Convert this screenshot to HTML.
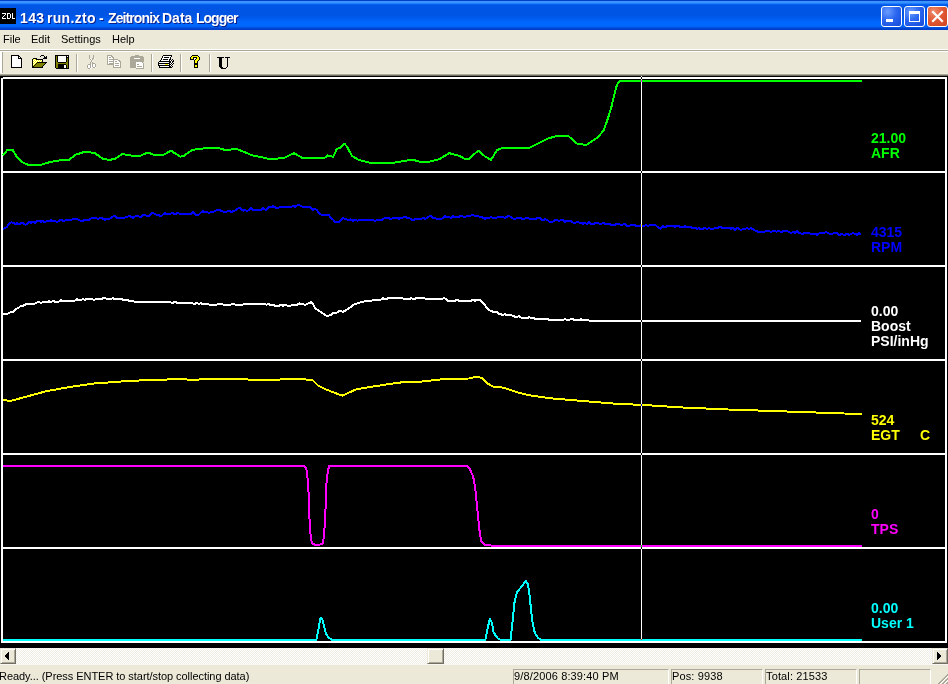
<!DOCTYPE html>
<html><head><meta charset="utf-8">
<style>
*{margin:0;padding:0;box-sizing:border-box}
html,body{width:948px;height:684px;overflow:hidden;background:#ECE9D8;font-family:"Liberation Sans",sans-serif;position:relative}
.a{position:absolute}
#title{left:0;top:0;width:948px;height:30px;
background:linear-gradient(to bottom,#0040C8 0px,#0040C8 1px,#3D95FF 1px,#3A93FF 3px,#0A6AF7 4px,#0058E8 5px,#0055E5 8px,#0054E3 15px,#005AEE 18px,#0063F8 21px,#0068FF 24px,#0066FC 26px,#005CEE 27px,#004CDA 28px,#003FC8 29px,#003FC8 30px)}
#ttl{left:20px;top:10px;font-weight:bold;font-size:14px;color:#fff;letter-spacing:-0.5px;text-shadow:1px 1px 0 #0A1C8A;white-space:nowrap;line-height:17px}
#zdl{left:0;top:8px;width:16px;height:16px;background:#000;color:#fff;font-size:8.5px;line-height:16px;text-align:center;font-weight:normal;letter-spacing:0px;-webkit-text-stroke:0.3px #fff}
.wb{top:6px;width:21px;height:21px;border:1px solid #fff;border-radius:3px}
#bmin{left:881px;background:radial-gradient(circle at 30% 25%,#6A9CFF 0,#2B67F0 45%,#1448D8 100%)}
#bmax{left:904px;background:radial-gradient(circle at 30% 25%,#6A9CFF 0,#2B67F0 45%,#1448D8 100%)}
#bcls{left:927px;background:radial-gradient(circle at 30% 25%,#EE8E6E 0,#E25A34 45%,#CC4220 100%)}
#menu{left:0;top:30px;width:948px;height:19px;background:#ECE9D8;font-size:11px;color:#000}
#menu span{position:absolute;top:3px;line-height:13px}
#mline{left:0;top:49px;width:948px;height:3px;background:linear-gradient(#fff 0,#fff 1px,#ACA899 1px,#ACA899 2px,#fff 2px)}
#tb{left:0;top:52px;width:948px;height:24px;background:linear-gradient(to bottom,#ECE9D8 0,#ECE9D8 21px,#EFEDE0 21px,#EFEDE0 22px,#ACA899 22px,#ACA899 23px,#716F64 23px)}
.sep{top:55px;width:2px;height:17px;border-left:1px solid #ACA899;border-right:1px solid #fff}
#grip{left:0;top:52px;width:3px;height:21px;border-right:1px solid #ACA899;background:#fff}
#chart{left:0;top:76px;width:948px;height:572px;background:#000}
#cursor{left:641px;top:76px;width:1px;height:564px;background:#fff;mix-blend-mode:difference}
.lab{position:absolute;left:871px;font-weight:bold;font-size:14px;line-height:15px;white-space:pre}
#sb{left:0;top:648px;width:948px;height:16px;
background-color:#fff;
background-image:linear-gradient(45deg,#EFEDE3 25%,transparent 25%,transparent 75%,#EFEDE3 75%),linear-gradient(45deg,#EFEDE3 25%,transparent 25%,transparent 75%,#EFEDE3 75%);
background-size:2px 2px;background-position:0 0,1px 1px}
.btn3d{position:absolute;background:#ECE9D8;border-top:1px solid #ECE9D8;border-left:1px solid #ECE9D8;border-right:1px solid #716F64;border-bottom:1px solid #716F64;box-shadow:inset 1px 1px 0 #fff,inset -1px -1px 0 #ACA899}
#status{left:0;top:664px;width:948px;height:20px;background:#ECE9D8;border-top:1px solid #F7F6F0;font-size:11px;color:#000}
.pane{position:absolute;top:4px;height:16px;border-top:1px solid #ACA899;border-left:1px solid #ACA899;border-right:1px solid #fff;white-space:nowrap;line-height:13px;padding-left:0px;padding-top:0px;letter-spacing:0.14px}
</style></head><body>
<div id="title" class="a"></div>
<svg class="a" style="left:0;top:8px" width="16" height="16" shape-rendering="crispEdges"><rect width="16" height="16" fill="#000"/><g fill="#fff"><rect x="2" y="5" width="4" height="1"/><rect x="5" y="6" width="1" height="1"/><rect x="4" y="7" width="1" height="1"/><rect x="3" y="8" width="1" height="1"/><rect x="2" y="9" width="1" height="1"/><rect x="2" y="10" width="4" height="1"/><rect x="7" y="5" width="1" height="6"/><rect x="8" y="5" width="2" height="1"/><rect x="8" y="10" width="2" height="1"/><rect x="10" y="6" width="1" height="4"/><rect x="12" y="5" width="1" height="6"/><rect x="13" y="10" width="2" height="1"/></g></svg>
<div id="ttl" class="a" style="left:0"><span class="a" style="left:20px;letter-spacing:0.4px">143</span><span class="a" style="left:47px;letter-spacing:0.3px">run.zto</span><span class="a" style="left:99px">-</span><span class="a" style="left:108px;letter-spacing:-0.9px">Zeitronix</span><span class="a" style="left:162px;letter-spacing:0px">Data</span><span class="a" style="left:196px;letter-spacing:-1px">Logger</span></div>
<div id="bmin" class="a wb"><div class="a" style="left:4px;top:12px;width:7px;height:3px;background:#fff"></div></div>
<div id="bmax" class="a wb"><div class="a" style="left:4px;top:4px;width:11px;height:11px;border:1px solid #fff;border-top-width:3px"></div></div>
<div id="bcls" class="a wb"><svg class="a" style="left:0;top:0" width="19" height="19" viewBox="0 0 19 19"><path d="M5 5 L14 14 M14 5 L5 14" stroke="#fff" stroke-width="2.2" stroke-linecap="square"/></svg></div>

<div id="menu" class="a"><span style="left:3px">File</span><span style="left:31px">Edit</span><span style="left:61px">Settings</span><span style="left:112px">Help</span></div>
<div id="mline" class="a"></div>
<div id="tb" class="a"></div>
<div id="grip" class="a"></div>
<svg class="a" style="left:0;top:52px" width="240" height="22" viewBox="0 52 240 22" shape-rendering="crispEdges">
<rect x="11" y="55" width="8" height="1" fill="#000"/>
<rect x="11" y="56" width="1" height="1" fill="#000"/>
<rect x="12" y="56" width="6" height="1" fill="#fff"/>
<rect x="18" y="56" width="2" height="1" fill="#000"/>
<rect x="11" y="57" width="1" height="1" fill="#000"/>
<rect x="12" y="57" width="6" height="1" fill="#fff"/>
<rect x="18" y="57" width="1" height="1" fill="#000"/>
<rect x="19" y="57" width="1" height="1" fill="#fff"/>
<rect x="20" y="57" width="1" height="1" fill="#000"/>
<rect x="11" y="58" width="1" height="1" fill="#000"/>
<rect x="12" y="58" width="6" height="1" fill="#fff"/>
<rect x="18" y="58" width="4" height="1" fill="#000"/>
<rect x="11" y="59" width="1" height="1" fill="#000"/>
<rect x="12" y="59" width="9" height="1" fill="#fff"/>
<rect x="21" y="59" width="1" height="1" fill="#000"/>
<rect x="11" y="60" width="1" height="1" fill="#000"/>
<rect x="12" y="60" width="9" height="1" fill="#fff"/>
<rect x="21" y="60" width="1" height="1" fill="#000"/>
<rect x="11" y="61" width="1" height="1" fill="#000"/>
<rect x="12" y="61" width="9" height="1" fill="#fff"/>
<rect x="21" y="61" width="1" height="1" fill="#000"/>
<rect x="11" y="62" width="1" height="1" fill="#000"/>
<rect x="12" y="62" width="9" height="1" fill="#fff"/>
<rect x="21" y="62" width="1" height="1" fill="#000"/>
<rect x="11" y="63" width="1" height="1" fill="#000"/>
<rect x="12" y="63" width="9" height="1" fill="#fff"/>
<rect x="21" y="63" width="1" height="1" fill="#000"/>
<rect x="11" y="64" width="1" height="1" fill="#000"/>
<rect x="12" y="64" width="9" height="1" fill="#fff"/>
<rect x="21" y="64" width="1" height="1" fill="#000"/>
<rect x="11" y="65" width="1" height="1" fill="#000"/>
<rect x="12" y="65" width="9" height="1" fill="#fff"/>
<rect x="21" y="65" width="1" height="1" fill="#000"/>
<rect x="11" y="66" width="1" height="1" fill="#000"/>
<rect x="12" y="66" width="9" height="1" fill="#fff"/>
<rect x="21" y="66" width="1" height="1" fill="#000"/>
<rect x="11" y="67" width="11" height="1" fill="#000"/>
<rect x="41" y="55" width="3" height="1" fill="#000"/>
<rect x="40" y="56" width="1" height="1" fill="#000"/>
<rect x="44" y="56" width="1" height="1" fill="#000"/>
<rect x="46" y="56" width="1" height="1" fill="#000"/>
<rect x="44" y="57" width="3" height="1" fill="#000"/>
<rect x="33" y="58" width="4" height="1" fill="#000"/>
<rect x="43" y="58" width="4" height="1" fill="#000"/>
<rect x="32" y="59" width="1" height="1" fill="#000"/>
<rect x="33" y="59" width="1" height="1" fill="#ffff00"/>
<rect x="34" y="59" width="1" height="1" fill="#fff"/>
<rect x="35" y="59" width="1" height="1" fill="#ffff00"/>
<rect x="36" y="59" width="7" height="1" fill="#000"/>
<rect x="32" y="60" width="1" height="1" fill="#000"/>
<rect x="33" y="60" width="1" height="1" fill="#fff"/>
<rect x="34" y="60" width="1" height="1" fill="#ffff00"/>
<rect x="35" y="60" width="1" height="1" fill="#fff"/>
<rect x="36" y="60" width="1" height="1" fill="#ffff00"/>
<rect x="37" y="60" width="1" height="1" fill="#fff"/>
<rect x="38" y="60" width="1" height="1" fill="#ffff00"/>
<rect x="39" y="60" width="1" height="1" fill="#fff"/>
<rect x="40" y="60" width="1" height="1" fill="#ffff00"/>
<rect x="41" y="60" width="1" height="1" fill="#fff"/>
<rect x="42" y="60" width="1" height="1" fill="#000"/>
<rect x="32" y="61" width="1" height="1" fill="#000"/>
<rect x="33" y="61" width="1" height="1" fill="#ffff00"/>
<rect x="34" y="61" width="1" height="1" fill="#fff"/>
<rect x="35" y="61" width="1" height="1" fill="#ffff00"/>
<rect x="36" y="61" width="1" height="1" fill="#fff"/>
<rect x="37" y="61" width="1" height="1" fill="#ffff00"/>
<rect x="38" y="61" width="1" height="1" fill="#fff"/>
<rect x="39" y="61" width="1" height="1" fill="#ffff00"/>
<rect x="40" y="61" width="1" height="1" fill="#fff"/>
<rect x="41" y="61" width="1" height="1" fill="#ffff00"/>
<rect x="42" y="61" width="1" height="1" fill="#000"/>
<rect x="32" y="62" width="1" height="1" fill="#000"/>
<rect x="33" y="62" width="1" height="1" fill="#fff"/>
<rect x="34" y="62" width="1" height="1" fill="#ffff00"/>
<rect x="35" y="62" width="1" height="1" fill="#fff"/>
<rect x="36" y="62" width="1" height="1" fill="#ffff00"/>
<rect x="37" y="62" width="10" height="1" fill="#000"/>
<rect x="32" y="63" width="1" height="1" fill="#000"/>
<rect x="33" y="63" width="1" height="1" fill="#ffff00"/>
<rect x="34" y="63" width="1" height="1" fill="#fff"/>
<rect x="35" y="63" width="1" height="1" fill="#ffff00"/>
<rect x="36" y="63" width="1" height="1" fill="#000"/>
<rect x="37" y="63" width="8" height="1" fill="#808000"/>
<rect x="45" y="63" width="1" height="1" fill="#000"/>
<rect x="32" y="64" width="1" height="1" fill="#000"/>
<rect x="33" y="64" width="1" height="1" fill="#fff"/>
<rect x="34" y="64" width="1" height="1" fill="#ffff00"/>
<rect x="35" y="64" width="1" height="1" fill="#000"/>
<rect x="36" y="64" width="8" height="1" fill="#808000"/>
<rect x="44" y="64" width="1" height="1" fill="#000"/>
<rect x="32" y="65" width="1" height="1" fill="#000"/>
<rect x="33" y="65" width="1" height="1" fill="#ffff00"/>
<rect x="34" y="65" width="1" height="1" fill="#000"/>
<rect x="35" y="65" width="8" height="1" fill="#808000"/>
<rect x="43" y="65" width="1" height="1" fill="#000"/>
<rect x="32" y="66" width="2" height="1" fill="#000"/>
<rect x="34" y="66" width="8" height="1" fill="#808000"/>
<rect x="42" y="66" width="1" height="1" fill="#000"/>
<rect x="32" y="67" width="11" height="1" fill="#000"/>
<rect x="55" y="55" width="14" height="1" fill="#000"/>
<rect x="55" y="56" width="1" height="1" fill="#000"/>
<rect x="56" y="56" width="1" height="1" fill="#808000"/>
<rect x="57" y="56" width="1" height="1" fill="#000"/>
<rect x="58" y="56" width="8" height="1" fill="#fff"/>
<rect x="66" y="56" width="1" height="1" fill="#000"/>
<rect x="67" y="56" width="1" height="1" fill="#fff"/>
<rect x="68" y="56" width="1" height="1" fill="#000"/>
<rect x="55" y="57" width="1" height="1" fill="#000"/>
<rect x="56" y="57" width="1" height="1" fill="#808000"/>
<rect x="57" y="57" width="1" height="1" fill="#000"/>
<rect x="58" y="57" width="8" height="1" fill="#fff"/>
<rect x="66" y="57" width="3" height="1" fill="#000"/>
<rect x="55" y="58" width="1" height="1" fill="#000"/>
<rect x="56" y="58" width="1" height="1" fill="#808000"/>
<rect x="57" y="58" width="1" height="1" fill="#000"/>
<rect x="58" y="58" width="8" height="1" fill="#fff"/>
<rect x="66" y="58" width="1" height="1" fill="#000"/>
<rect x="67" y="58" width="1" height="1" fill="#808000"/>
<rect x="68" y="58" width="1" height="1" fill="#000"/>
<rect x="55" y="59" width="1" height="1" fill="#000"/>
<rect x="56" y="59" width="1" height="1" fill="#808000"/>
<rect x="57" y="59" width="1" height="1" fill="#000"/>
<rect x="58" y="59" width="8" height="1" fill="#fff"/>
<rect x="66" y="59" width="1" height="1" fill="#000"/>
<rect x="67" y="59" width="1" height="1" fill="#808000"/>
<rect x="68" y="59" width="1" height="1" fill="#000"/>
<rect x="55" y="60" width="1" height="1" fill="#000"/>
<rect x="56" y="60" width="1" height="1" fill="#808000"/>
<rect x="57" y="60" width="1" height="1" fill="#000"/>
<rect x="58" y="60" width="8" height="1" fill="#fff"/>
<rect x="66" y="60" width="1" height="1" fill="#000"/>
<rect x="67" y="60" width="1" height="1" fill="#808000"/>
<rect x="68" y="60" width="1" height="1" fill="#000"/>
<rect x="55" y="61" width="1" height="1" fill="#000"/>
<rect x="56" y="61" width="1" height="1" fill="#808000"/>
<rect x="57" y="61" width="1" height="1" fill="#000"/>
<rect x="58" y="61" width="8" height="1" fill="#fff"/>
<rect x="66" y="61" width="1" height="1" fill="#000"/>
<rect x="67" y="61" width="1" height="1" fill="#808000"/>
<rect x="68" y="61" width="1" height="1" fill="#000"/>
<rect x="55" y="62" width="1" height="1" fill="#000"/>
<rect x="56" y="62" width="2" height="1" fill="#808000"/>
<rect x="58" y="62" width="8" height="1" fill="#000"/>
<rect x="66" y="62" width="2" height="1" fill="#808000"/>
<rect x="68" y="62" width="1" height="1" fill="#000"/>
<rect x="55" y="63" width="1" height="1" fill="#000"/>
<rect x="56" y="63" width="12" height="1" fill="#808000"/>
<rect x="68" y="63" width="1" height="1" fill="#000"/>
<rect x="55" y="64" width="1" height="1" fill="#000"/>
<rect x="56" y="64" width="2" height="1" fill="#808000"/>
<rect x="58" y="64" width="8" height="1" fill="#000"/>
<rect x="66" y="64" width="2" height="1" fill="#808000"/>
<rect x="68" y="64" width="1" height="1" fill="#000"/>
<rect x="55" y="65" width="1" height="1" fill="#000"/>
<rect x="56" y="65" width="2" height="1" fill="#808000"/>
<rect x="58" y="65" width="6" height="1" fill="#000"/>
<rect x="64" y="65" width="2" height="1" fill="#fff"/>
<rect x="66" y="65" width="1" height="1" fill="#000"/>
<rect x="67" y="65" width="1" height="1" fill="#808000"/>
<rect x="68" y="65" width="1" height="1" fill="#000"/>
<rect x="55" y="66" width="1" height="1" fill="#000"/>
<rect x="56" y="66" width="2" height="1" fill="#808000"/>
<rect x="58" y="66" width="6" height="1" fill="#000"/>
<rect x="64" y="66" width="2" height="1" fill="#fff"/>
<rect x="66" y="66" width="1" height="1" fill="#000"/>
<rect x="67" y="66" width="1" height="1" fill="#808000"/>
<rect x="68" y="66" width="1" height="1" fill="#000"/>
<rect x="55" y="67" width="1" height="1" fill="#000"/>
<rect x="56" y="67" width="2" height="1" fill="#808000"/>
<rect x="58" y="67" width="6" height="1" fill="#000"/>
<rect x="64" y="67" width="2" height="1" fill="#fff"/>
<rect x="66" y="67" width="1" height="1" fill="#000"/>
<rect x="67" y="67" width="1" height="1" fill="#808000"/>
<rect x="68" y="67" width="1" height="1" fill="#000"/>
<rect x="56" y="68" width="13" height="1" fill="#000"/>
<rect x="89" y="55" width="1" height="1" fill="#ACA899"/>
<rect x="93" y="55" width="1" height="1" fill="#ACA899"/>
<rect x="89" y="56" width="1" height="1" fill="#ACA899"/>
<rect x="93" y="56" width="1" height="1" fill="#ACA899"/>
<rect x="89" y="57" width="1" height="1" fill="#ACA899"/>
<rect x="93" y="57" width="1" height="1" fill="#ACA899"/>
<rect x="89" y="58" width="1" height="1" fill="#ACA899"/>
<rect x="90" y="58" width="1" height="1" fill="#fff"/>
<rect x="92" y="58" width="2" height="1" fill="#ACA899"/>
<rect x="94" y="58" width="1" height="1" fill="#fff"/>
<rect x="90" y="59" width="1" height="1" fill="#ACA899"/>
<rect x="91" y="59" width="1" height="1" fill="#fff"/>
<rect x="92" y="59" width="1" height="1" fill="#ACA899"/>
<rect x="91" y="60" width="1" height="1" fill="#ACA899"/>
<rect x="91" y="61" width="1" height="1" fill="#ACA899"/>
<rect x="92" y="61" width="1" height="1" fill="#fff"/>
<rect x="90" y="62" width="1" height="1" fill="#ACA899"/>
<rect x="92" y="62" width="1" height="1" fill="#ACA899"/>
<rect x="90" y="63" width="1" height="1" fill="#ACA899"/>
<rect x="92" y="63" width="3" height="1" fill="#ACA899"/>
<rect x="88" y="64" width="3" height="1" fill="#ACA899"/>
<rect x="91" y="64" width="1" height="1" fill="#fff"/>
<rect x="92" y="64" width="1" height="1" fill="#ACA899"/>
<rect x="93" y="64" width="2" height="1" fill="#fff"/>
<rect x="95" y="64" width="1" height="1" fill="#ACA899"/>
<rect x="87" y="65" width="1" height="1" fill="#ACA899"/>
<rect x="88" y="65" width="2" height="1" fill="#fff"/>
<rect x="90" y="65" width="1" height="1" fill="#ACA899"/>
<rect x="91" y="65" width="1" height="1" fill="#fff"/>
<rect x="92" y="65" width="1" height="1" fill="#ACA899"/>
<rect x="93" y="65" width="2" height="1" fill="#fff"/>
<rect x="95" y="65" width="1" height="1" fill="#ACA899"/>
<rect x="87" y="66" width="1" height="1" fill="#ACA899"/>
<rect x="88" y="66" width="2" height="1" fill="#fff"/>
<rect x="90" y="66" width="1" height="1" fill="#ACA899"/>
<rect x="91" y="66" width="1" height="1" fill="#fff"/>
<rect x="92" y="66" width="1" height="1" fill="#ACA899"/>
<rect x="93" y="66" width="2" height="1" fill="#fff"/>
<rect x="95" y="66" width="1" height="1" fill="#ACA899"/>
<rect x="87" y="67" width="1" height="1" fill="#ACA899"/>
<rect x="88" y="67" width="2" height="1" fill="#fff"/>
<rect x="90" y="67" width="1" height="1" fill="#ACA899"/>
<rect x="91" y="67" width="1" height="1" fill="#fff"/>
<rect x="93" y="67" width="2" height="1" fill="#ACA899"/>
<rect x="95" y="67" width="1" height="1" fill="#fff"/>
<rect x="88" y="68" width="2" height="1" fill="#ACA899"/>
<rect x="90" y="68" width="1" height="1" fill="#fff"/>
<rect x="107" y="55" width="5" height="1" fill="#ACA899"/>
<rect x="107" y="56" width="1" height="1" fill="#ACA899"/>
<rect x="108" y="56" width="3" height="1" fill="#fff"/>
<rect x="111" y="56" width="2" height="1" fill="#ACA899"/>
<rect x="107" y="57" width="1" height="1" fill="#ACA899"/>
<rect x="108" y="57" width="1" height="1" fill="#fff"/>
<rect x="109" y="57" width="2" height="1" fill="#ACA899"/>
<rect x="111" y="57" width="1" height="1" fill="#fff"/>
<rect x="112" y="57" width="2" height="1" fill="#ACA899"/>
<rect x="107" y="58" width="1" height="1" fill="#ACA899"/>
<rect x="108" y="58" width="5" height="1" fill="#fff"/>
<rect x="113" y="58" width="1" height="1" fill="#ACA899"/>
<rect x="107" y="59" width="1" height="1" fill="#ACA899"/>
<rect x="108" y="59" width="1" height="1" fill="#fff"/>
<rect x="109" y="59" width="9" height="1" fill="#ACA899"/>
<rect x="107" y="60" width="1" height="1" fill="#ACA899"/>
<rect x="108" y="60" width="5" height="1" fill="#fff"/>
<rect x="113" y="60" width="1" height="1" fill="#ACA899"/>
<rect x="114" y="60" width="4" height="1" fill="#fff"/>
<rect x="118" y="60" width="2" height="1" fill="#ACA899"/>
<rect x="107" y="61" width="1" height="1" fill="#ACA899"/>
<rect x="108" y="61" width="1" height="1" fill="#fff"/>
<rect x="109" y="61" width="5" height="1" fill="#ACA899"/>
<rect x="114" y="61" width="1" height="1" fill="#fff"/>
<rect x="115" y="61" width="2" height="1" fill="#ACA899"/>
<rect x="117" y="61" width="2" height="1" fill="#fff"/>
<rect x="119" y="61" width="2" height="1" fill="#ACA899"/>
<rect x="107" y="62" width="1" height="1" fill="#ACA899"/>
<rect x="108" y="62" width="5" height="1" fill="#fff"/>
<rect x="113" y="62" width="1" height="1" fill="#ACA899"/>
<rect x="114" y="62" width="6" height="1" fill="#fff"/>
<rect x="120" y="62" width="1" height="1" fill="#ACA899"/>
<rect x="107" y="63" width="1" height="1" fill="#ACA899"/>
<rect x="108" y="63" width="1" height="1" fill="#fff"/>
<rect x="109" y="63" width="5" height="1" fill="#ACA899"/>
<rect x="114" y="63" width="1" height="1" fill="#fff"/>
<rect x="115" y="63" width="4" height="1" fill="#ACA899"/>
<rect x="119" y="63" width="1" height="1" fill="#fff"/>
<rect x="120" y="63" width="1" height="1" fill="#ACA899"/>
<rect x="107" y="64" width="7" height="1" fill="#ACA899"/>
<rect x="114" y="64" width="6" height="1" fill="#fff"/>
<rect x="120" y="64" width="1" height="1" fill="#ACA899"/>
<rect x="113" y="65" width="1" height="1" fill="#ACA899"/>
<rect x="114" y="65" width="1" height="1" fill="#fff"/>
<rect x="115" y="65" width="4" height="1" fill="#ACA899"/>
<rect x="119" y="65" width="1" height="1" fill="#fff"/>
<rect x="120" y="65" width="1" height="1" fill="#ACA899"/>
<rect x="113" y="66" width="1" height="1" fill="#ACA899"/>
<rect x="114" y="66" width="6" height="1" fill="#fff"/>
<rect x="120" y="66" width="1" height="1" fill="#ACA899"/>
<rect x="113" y="67" width="8" height="1" fill="#ACA899"/>
<rect x="135" y="55" width="4" height="1" fill="#ACA899"/>
<rect x="131" y="56" width="12" height="1" fill="#ACA899"/>
<rect x="130" y="57" width="14" height="1" fill="#ACA899"/>
<rect x="130" y="58" width="4" height="1" fill="#ACA899"/>
<rect x="134" y="58" width="6" height="1" fill="#fff"/>
<rect x="140" y="58" width="4" height="1" fill="#ACA899"/>
<rect x="130" y="59" width="14" height="1" fill="#ACA899"/>
<rect x="130" y="60" width="14" height="1" fill="#ACA899"/>
<rect x="130" y="61" width="14" height="1" fill="#ACA899"/>
<rect x="130" y="62" width="6" height="1" fill="#ACA899"/>
<rect x="136" y="62" width="6" height="1" fill="#fff"/>
<rect x="142" y="62" width="1" height="1" fill="#ACA899"/>
<rect x="130" y="63" width="6" height="1" fill="#ACA899"/>
<rect x="136" y="63" width="7" height="1" fill="#fff"/>
<rect x="143" y="63" width="1" height="1" fill="#ACA899"/>
<rect x="130" y="64" width="6" height="1" fill="#ACA899"/>
<rect x="136" y="64" width="1" height="1" fill="#fff"/>
<rect x="137" y="64" width="2" height="1" fill="#ACA899"/>
<rect x="139" y="64" width="4" height="1" fill="#fff"/>
<rect x="143" y="64" width="1" height="1" fill="#ACA899"/>
<rect x="130" y="65" width="6" height="1" fill="#ACA899"/>
<rect x="136" y="65" width="7" height="1" fill="#fff"/>
<rect x="143" y="65" width="1" height="1" fill="#ACA899"/>
<rect x="130" y="66" width="6" height="1" fill="#ACA899"/>
<rect x="136" y="66" width="1" height="1" fill="#fff"/>
<rect x="137" y="66" width="5" height="1" fill="#ACA899"/>
<rect x="142" y="66" width="1" height="1" fill="#fff"/>
<rect x="143" y="66" width="1" height="1" fill="#ACA899"/>
<rect x="130" y="67" width="6" height="1" fill="#ACA899"/>
<rect x="136" y="67" width="7" height="1" fill="#fff"/>
<rect x="143" y="67" width="1" height="1" fill="#ACA899"/>
<rect x="136" y="68" width="8" height="1" fill="#ACA899"/>
<rect x="163" y="55" width="9" height="1" fill="#000"/>
<rect x="162" y="56" width="1" height="1" fill="#000"/>
<rect x="163" y="56" width="8" height="1" fill="#fff"/>
<rect x="171" y="56" width="1" height="1" fill="#000"/>
<rect x="162" y="57" width="1" height="1" fill="#000"/>
<rect x="163" y="57" width="1" height="1" fill="#fff"/>
<rect x="164" y="57" width="5" height="1" fill="#000"/>
<rect x="169" y="57" width="1" height="1" fill="#fff"/>
<rect x="170" y="57" width="1" height="1" fill="#000"/>
<rect x="161" y="58" width="1" height="1" fill="#000"/>
<rect x="162" y="58" width="8" height="1" fill="#fff"/>
<rect x="170" y="58" width="1" height="1" fill="#000"/>
<rect x="161" y="59" width="1" height="1" fill="#000"/>
<rect x="162" y="59" width="1" height="1" fill="#fff"/>
<rect x="163" y="59" width="5" height="1" fill="#000"/>
<rect x="168" y="59" width="1" height="1" fill="#fff"/>
<rect x="169" y="59" width="2" height="1" fill="#000"/>
<rect x="172" y="59" width="1" height="1" fill="#000"/>
<rect x="160" y="60" width="1" height="1" fill="#000"/>
<rect x="161" y="60" width="8" height="1" fill="#fff"/>
<rect x="169" y="60" width="1" height="1" fill="#000"/>
<rect x="170" y="60" width="1" height="1" fill="#fff"/>
<rect x="171" y="60" width="1" height="1" fill="#000"/>
<rect x="173" y="60" width="1" height="1" fill="#000"/>
<rect x="159" y="61" width="12" height="1" fill="#000"/>
<rect x="171" y="61" width="1" height="1" fill="#fff"/>
<rect x="172" y="61" width="2" height="1" fill="#000"/>
<rect x="158" y="62" width="1" height="1" fill="#000"/>
<rect x="159" y="62" width="10" height="1" fill="#fff"/>
<rect x="169" y="62" width="2" height="1" fill="#000"/>
<rect x="171" y="62" width="1" height="1" fill="#fff"/>
<rect x="172" y="62" width="1" height="1" fill="#000"/>
<rect x="158" y="63" width="12" height="1" fill="#000"/>
<rect x="170" y="63" width="1" height="1" fill="#fff"/>
<rect x="171" y="63" width="1" height="1" fill="#000"/>
<rect x="172" y="63" width="1" height="1" fill="#fff"/>
<rect x="173" y="63" width="1" height="1" fill="#000"/>
<rect x="158" y="64" width="1" height="1" fill="#000"/>
<rect x="159" y="64" width="6" height="1" fill="#fff"/>
<rect x="165" y="64" width="3" height="1" fill="#ffff00"/>
<rect x="168" y="64" width="1" height="1" fill="#fff"/>
<rect x="169" y="64" width="2" height="1" fill="#000"/>
<rect x="171" y="64" width="1" height="1" fill="#fff"/>
<rect x="172" y="64" width="1" height="1" fill="#000"/>
<rect x="158" y="65" width="12" height="1" fill="#000"/>
<rect x="170" y="65" width="1" height="1" fill="#fff"/>
<rect x="171" y="65" width="1" height="1" fill="#000"/>
<rect x="159" y="66" width="1" height="1" fill="#000"/>
<rect x="160" y="66" width="9" height="1" fill="#fff"/>
<rect x="169" y="66" width="2" height="1" fill="#000"/>
<rect x="171" y="66" width="1" height="1" fill="#fff"/>
<rect x="172" y="66" width="1" height="1" fill="#000"/>
<rect x="159" y="67" width="13" height="1" fill="#000"/>
<rect x="192" y="55" width="6" height="1" fill="#000"/>
<rect x="191" y="56" width="1" height="1" fill="#000"/>
<rect x="192" y="56" width="6" height="1" fill="#ffff00"/>
<rect x="198" y="56" width="1" height="1" fill="#000"/>
<rect x="190" y="57" width="1" height="1" fill="#000"/>
<rect x="191" y="57" width="2" height="1" fill="#ffff00"/>
<rect x="193" y="57" width="4" height="1" fill="#000"/>
<rect x="197" y="57" width="2" height="1" fill="#ffff00"/>
<rect x="199" y="57" width="1" height="1" fill="#000"/>
<rect x="190" y="58" width="1" height="1" fill="#000"/>
<rect x="191" y="58" width="2" height="1" fill="#ffff00"/>
<rect x="193" y="58" width="1" height="1" fill="#000"/>
<rect x="194" y="58" width="2" height="1" fill="#fff"/>
<rect x="196" y="58" width="1" height="1" fill="#000"/>
<rect x="197" y="58" width="2" height="1" fill="#ffff00"/>
<rect x="199" y="58" width="1" height="1" fill="#000"/>
<rect x="190" y="59" width="4" height="1" fill="#000"/>
<rect x="195" y="59" width="1" height="1" fill="#000"/>
<rect x="196" y="59" width="3" height="1" fill="#ffff00"/>
<rect x="199" y="59" width="1" height="1" fill="#000"/>
<rect x="194" y="60" width="1" height="1" fill="#000"/>
<rect x="195" y="60" width="3" height="1" fill="#ffff00"/>
<rect x="198" y="60" width="1" height="1" fill="#000"/>
<rect x="194" y="61" width="1" height="1" fill="#000"/>
<rect x="195" y="61" width="2" height="1" fill="#ffff00"/>
<rect x="197" y="61" width="1" height="1" fill="#000"/>
<rect x="194" y="62" width="1" height="1" fill="#000"/>
<rect x="195" y="62" width="2" height="1" fill="#ffff00"/>
<rect x="197" y="62" width="1" height="1" fill="#000"/>
<rect x="194" y="63" width="4" height="1" fill="#000"/>
<rect x="194" y="64" width="4" height="1" fill="#000"/>
<rect x="194" y="65" width="1" height="1" fill="#000"/>
<rect x="195" y="65" width="2" height="1" fill="#ffff00"/>
<rect x="197" y="65" width="1" height="1" fill="#000"/>
<rect x="194" y="66" width="1" height="1" fill="#000"/>
<rect x="195" y="66" width="2" height="1" fill="#ffff00"/>
<rect x="197" y="66" width="1" height="1" fill="#000"/>
<rect x="194" y="67" width="4" height="1" fill="#000"/>
<rect x="217" y="57" width="7" height="1" fill="#000"/>
<rect x="225" y="57" width="5" height="1" fill="#000"/>
<rect x="219" y="58" width="3" height="1" fill="#000"/>
<rect x="227" y="58" width="1" height="1" fill="#000"/>
<rect x="219" y="59" width="3" height="1" fill="#000"/>
<rect x="227" y="59" width="1" height="1" fill="#000"/>
<rect x="219" y="60" width="3" height="1" fill="#000"/>
<rect x="227" y="60" width="1" height="1" fill="#000"/>
<rect x="219" y="61" width="3" height="1" fill="#000"/>
<rect x="227" y="61" width="1" height="1" fill="#000"/>
<rect x="219" y="62" width="3" height="1" fill="#000"/>
<rect x="227" y="62" width="1" height="1" fill="#000"/>
<rect x="219" y="63" width="3" height="1" fill="#000"/>
<rect x="227" y="63" width="1" height="1" fill="#000"/>
<rect x="219" y="64" width="3" height="1" fill="#000"/>
<rect x="227" y="64" width="1" height="1" fill="#000"/>
<rect x="219" y="65" width="3" height="1" fill="#000"/>
<rect x="227" y="65" width="1" height="1" fill="#000"/>
<rect x="219" y="66" width="3" height="1" fill="#000"/>
<rect x="227" y="66" width="1" height="1" fill="#000"/>
<rect x="220" y="67" width="3" height="1" fill="#000"/>
<rect x="226" y="67" width="1" height="1" fill="#000"/>
<rect x="221" y="68" width="5" height="1" fill="#000"/>
<rect x="76" y="54" width="1" height="18" fill="#ACA899"/><rect x="77" y="54" width="1" height="18" fill="#fff"/><rect x="151" y="54" width="1" height="18" fill="#ACA899"/><rect x="152" y="54" width="1" height="18" fill="#fff"/><rect x="180" y="54" width="1" height="18" fill="#ACA899"/><rect x="181" y="54" width="1" height="18" fill="#fff"/><rect x="209" y="54" width="1" height="18" fill="#ACA899"/><rect x="210" y="54" width="1" height="18" fill="#fff"/>
</svg>


<div id="chart" class="a">
<svg class="a" style="left:0;top:-76px" width="948" height="724" viewBox="0 0 948 724">
 <rect x="2" y="78" width="944" height="564" fill="none" stroke="#fff" stroke-width="2" shape-rendering="crispEdges"/>
 <g fill="none" stroke="#fff" stroke-width="2" shape-rendering="crispEdges">
  <line x1="3" y1="172" x2="945" y2="172"/>
  <line x1="3" y1="266" x2="945" y2="266"/>
  <line x1="3" y1="360" x2="945" y2="360"/>
  <line x1="3" y1="454" x2="945" y2="454"/>
  <line x1="3" y1="548" x2="945" y2="548"/>
 </g>
 <g fill="none" stroke-width="2" stroke-linejoin="round" shape-rendering="crispEdges">

<polyline points="3.0,155.4 7.6,149.5 12.7,150.0 16.9,157.0 22.0,162.0 27.8,164.7 41.4,164.7 50.6,161.9 59.0,160.5 68.4,160.2 76.0,154.6 85.2,151.7 94.5,152.9 103.0,158.8 109.7,160.0 115.6,158.5 122.4,153.8 128.3,155.4 140.0,155.8 147.7,152.6 153.6,154.6 155.8,155.3 162.8,155.3 170.9,150.6 180.2,156.7 183.6,156.0 191.8,150.2 198.7,148.8 212.6,147.8 219.6,148.3 224.2,149.7 231.2,149.5 235.8,148.8 242.8,151.3 252.1,155.3 261.4,157.1 270.6,159.4 284.6,157.8 293.9,153.2 303.1,158.3 324.0,158.3 327.5,155.5 333.3,156.7 336.8,149.0 340.3,147.8 344.4,143.7 347.2,146.7 351.9,156.0 358.8,159.9 369.3,162.5 394.8,162.5 406.4,160.6 413.4,159.9 420.3,161.8 428.4,161.8 438.9,159.4 449.3,153.2 459.8,156.0 464.4,158.7 469.0,158.7 478.3,150.6 485.3,156.7 491.1,159.9 496.9,150.2 502.7,147.8 529.4,147.8 538.7,143.2 547.9,138.6 557.2,135.8 568.1,135.8 577.7,144.2 586.6,144.7 596.9,138.0 603.6,130.7 607.3,120.3 611.0,108.5 613.9,96.7 616.9,84.9 619.8,81.2 862.0,80.8" stroke="#00ff00"/>
<polyline points="3,229.0 5,227.9 7,227.2 9,223.5 11,222.4 13,222.7 15,224.0 17,223.3 19,224.4 21,223.1 23,222.8 25,224.6 27,224.3 29,222.0 31,222.7 33,221.4 35,223.1 37,221.0 39,220.9 41,221.8 43,220.7 45,222.6 47,220.5 49,221.4 51,220.3 53,221.2 55,221.1 57,222.0 59,220.9 61,219.8 63,220.7 65,220.5 67,219.4 69,220.3 71,220.2 73,219.1 75,219.1 77,219.1 79,220.1 81,221.0 83,220.7 85,219.4 87,220.1 89,219.8 91,218.5 93,218.2 95,218.3 97,218.5 99,218.6 101,217.7 103,218.8 105,219.8 107,218.5 109,219.1 111,217.8 113,216.5 115,216.2 117,218.4 119,218.1 121,218.5 123,217.5 125,217.6 127,217.1 129,215.9 131,216.7 133,217.8 135,216.6 137,215.4 139,216.6 141,216.8 143,215.0 145,215.2 147,216.0 149,216.4 151,213.7 153,213.0 155,213.8 157,215.4 159,215.1 161,216.2 163,214.6 165,213.1 167,214.6 169,213.6 171,213.6 173,212.6 175,214.6 177,212.6 179,213.6 181,213.6 183,213.6 185,213.6 187,214.4 189,214.0 191,213.7 193,211.6 195,213.6 197,215.6 199,214.6 201,212.4 203,211.2 205,212.5 207,211.9 209,213.2 211,212.1 213,212.4 215,210.8 217,210.1 219,209.6 221,211.0 223,211.5 225,211.6 227,211.5 229,210.4 231,212.3 233,211.2 235,210.4 237,209.4 239,207.5 241,209.1 243,210.6 245,210.2 247,210.8 249,210.0 251,208.2 253,209.9 255,209.8 257,209.8 259,209.7 261,209.7 263,207.6 265,209.6 267,209.5 269,206.9 271,207.1 273,206.2 275,207.3 277,208.4 279,207.5 281,206.6 283,207.6 285,206.7 287,206.7 289,206.5 291,207.2 293,205.9 295,206.7 297,205.4 299,205.1 301,206.0 303,207.2 305,206.5 307,206.7 309,207.0 311,207.7 313,209.8 315,208.9 317,210.0 319,213.2 321,214.4 323,215.0 325,215.5 327,215.1 329,215.1 331,218.3 333,219.4 335,222.5 337,221.9 339,221.9 341,219.9 343,217.9 345,219.1 347,219.5 349,219.9 351,219.4 353,220.8 355,219.8 357,220.6 359,220.3 361,220.0 363,219.7 365,219.5 367,219.5 369,219.6 371,219.7 373,219.9 375,221.0 377,220.1 379,219.8 381,220.5 383,219.1 385,217.8 387,217.5 389,218.2 391,219.1 393,218.0 395,217.9 397,217.8 399,218.8 401,217.7 403,217.6 405,216.5 407,218.1 409,217.6 411,219.2 413,220.3 415,219.1 417,218.9 419,218.7 421,219.5 423,217.4 425,219.2 427,218.1 429,216.6 431,216.1 433,217.8 435,217.6 437,219.4 439,218.9 441,219.3 443,217.7 445,216.1 447,217.4 449,217.4 451,217.7 453,216.1 455,217.4 457,217.1 459,216.9 461,215.6 463,216.4 465,217.1 467,215.9 469,216.6 471,215.4 473,215.1 475,215.9 477,215.9 479,216.5 481,216.6 483,217.7 485,218.8 487,217.9 489,218.1 491,217.0 493,217.8 495,217.7 497,217.5 499,217.4 501,217.2 503,217.1 505,217.9 507,216.8 509,215.8 511,217.2 513,218.5 515,218.8 517,218.1 519,218.5 521,217.6 523,219.6 525,218.6 527,217.6 529,218.6 531,218.6 533,218.6 535,219.6 537,217.6 539,217.6 541,219.0 543,220.6 545,219.2 547,219.8 549,221.4 551,222.0 553,221.6 555,220.2 557,219.8 559,221.4 561,219.5 563,219.6 565,221.7 567,220.8 569,221.0 571,221.3 573,222.6 575,222.9 577,222.2 579,222.5 581,222.7 583,223.8 585,222.9 587,224.0 589,222.1 591,224.2 593,224.2 595,223.3 597,222.4 599,223.5 601,224.5 603,222.6 605,223.7 607,224.0 609,223.5 611,224.9 613,225.3 615,224.8 617,223.8 619,223.9 621,225.2 623,224.4 625,223.6 627,225.9 629,226.1 631,225.1 633,225.1 635,225.2 637,226.2 639,226.2 641,225.3 643,226.4 645,225.4 647,225.5 649,225.5 651,224.6 653,225.6 655,224.7 657,226.4 659,228.2 661,228.6 663,226.1 665,227.6 667,226.2 669,226.4 671,225.5 673,225.7 675,226.8 677,225.9 679,226.1 681,227.2 683,227.2 685,226.2 687,227.2 689,227.2 691,227.2 693,228.2 695,227.5 697,228.8 699,228.1 701,229.4 703,228.7 705,228.0 707,229.1 709,228.0 711,228.8 713,229.6 715,227.5 717,228.3 719,227.2 721,227.3 723,228.4 725,227.5 727,228.5 729,227.6 731,228.7 733,227.7 735,229.8 737,227.8 739,228.9 741,229.9 743,229.0 745,229.0 747,228.0 749,229.1 751,228.1 753,229.2 755,230.4 757,231.3 759,232.1 761,231.9 763,231.7 765,231.5 767,231.3 769,231.1 771,231.9 773,231.0 775,231.3 777,231.6 779,230.9 781,232.2 783,231.3 785,231.2 787,231.1 789,232.0 791,232.9 793,231.9 795,232.8 797,231.1 799,233.3 801,233.5 803,233.7 805,233.0 807,233.2 809,233.4 811,233.7 813,233.8 815,233.7 817,234.7 819,233.6 821,232.6 823,233.5 825,232.5 827,232.4 829,233.4 831,234.3 833,233.4 835,232.6 837,232.8 839,235.1 841,234.3 843,234.5 845,234.8 847,233.4 849,235.1 851,233.7 853,233.3 855,233.7 857,235.0 859,233.3 861,234.6" stroke="#0000ff"/>
<polyline points="3,314.5 5,314.1 7,313.7 9,313.3 11,311.9 13,311.7 15,310.1 17,308.5 19,307.5 21,305.6 23,305.8 25,304.9 27,303.5 29,304.3 31,304.0 33,303.8 35,303.6 37,302.4 39,302.2 41,303.0 43,301.8 45,302.5 47,302.4 49,301.2 51,302.1 53,300.9 55,301.8 57,301.6 59,301.5 61,300.3 63,301.2 65,301.1 67,300.9 69,300.8 71,300.7 73,300.6 75,300.5 77,299.3 79,300.2 81,300.1 83,299.0 85,299.9 87,298.8 89,298.8 91,298.7 93,299.6 95,299.5 97,298.4 99,299.3 101,299.2 103,298.2 105,298.1 107,299.0 109,298.9 111,299.0 113,298.2 115,299.3 117,298.5 119,298.6 121,298.8 123,299.9 125,300.1 127,299.4 129,300.7 131,301.0 133,301.4 135,301.7 137,302.0 139,302.4 141,302.4 143,301.4 145,302.4 147,302.4 149,301.4 151,302.4 153,301.4 155,302.4 157,302.4 159,302.4 161,302.4 163,302.4 165,301.5 167,302.5 169,301.6 171,302.6 173,302.7 175,301.7 177,302.8 179,302.8 181,302.9 183,303.0 185,303.1 187,303.3 189,303.4 191,302.5 193,303.6 195,303.7 197,302.9 199,304.0 201,303.1 203,304.2 205,304.4 207,303.5 209,304.6 211,304.7 213,304.7 215,304.7 217,304.6 219,303.6 221,303.6 223,304.6 225,304.6 227,304.6 229,304.6 231,304.5 233,303.5 235,304.5 237,304.5 239,304.5 241,304.5 243,304.5 245,303.4 247,304.4 249,303.4 251,304.4 253,304.4 255,304.4 257,304.4 259,304.3 261,304.3 263,304.3 265,304.3 267,304.6 269,304.1 271,305.5 273,304.9 275,305.8 277,305.8 279,305.8 281,304.7 283,305.7 285,304.6 287,305.6 289,305.5 291,305.5 293,304.5 295,305.4 297,305.0 299,303.4 301,303.8 303,304.1 305,304.9 307,303.9 309,303.3 311,302.3 313,304.4 315,307.6 317,309.6 319,310.9 321,312.2 323,313.5 325,314.9 327,316.2 329,315.5 331,314.7 333,312.8 335,312.9 337,312.6 339,311.3 341,311.0 343,311.8 345,310.7 347,309.4 349,308.2 351,306.9 353,304.6 355,304.4 357,303.4 359,302.8 361,302.3 363,301.7 365,301.4 367,301.2 369,300.9 371,300.6 373,300.3 375,300.1 377,299.9 379,299.7 381,299.5 383,298.3 385,299.1 387,298.9 389,297.7 391,298.5 393,298.3 395,298.1 397,297.9 399,298.0 401,298.2 403,298.5 405,298.8 407,299.1 409,299.3 411,298.2 413,299.0 415,298.8 417,297.5 419,298.3 421,298.1 423,297.9 425,298.6 427,299.6 429,298.5 431,299.3 433,299.2 435,299.1 437,298.9 439,298.8 441,298.6 443,298.5 445,298.4 447,300.4 449,300.8 451,300.8 453,300.8 455,300.8 457,299.8 459,300.8 461,300.8 463,300.8 465,300.8 467,300.8 469,300.8 471,300.8 473,299.8 475,300.8 477,299.8 479,299.8 481,300.5 483,303.3 485,305.1 487,308.0 489,310.1 491,310.9 493,311.7 495,312.5 497,312.2 499,314.0 501,314.4 503,314.8 505,314.2 507,315.6 509,315.0 511,315.4 513,315.6 515,316.8 517,317.0 519,316.2 521,317.5 523,317.7 525,317.9 527,318.1 529,317.3 531,317.6 533,317.7 535,318.8 537,319.0 539,319.1 541,319.2 543,319.4 545,318.5 547,318.6 549,319.7 551,319.8 553,319.8 555,319.9 557,319.9 559,319.9 561,320.0 563,320.0 565,319.0 567,320.1 569,320.1 571,319.1 573,319.2 575,320.2 577,320.2 579,320.2 581,319.3 583,320.3 585,320.4 587,320.4 589,320.5 591,320.5 593,320.5 595,320.5 597,320.5 599,320.5 601,320.5 603,320.5 605,320.5 607,320.5 609,320.5 611,320.5 613,320.5 615,320.5 617,320.5 619,320.5 621,320.5 623,320.5 625,320.5 627,320.5 629,320.5 631,320.5 633,320.5 635,320.5 637,320.5 639,320.5 641,320.5 643,320.5 645,320.5 647,320.5 649,320.5 651,320.5 653,320.5 655,320.5 657,320.5 659,320.5 661,320.5 663,320.5 665,320.5 667,320.5 669,320.5 671,320.5 673,320.5 675,320.5 677,320.5 679,320.5 681,320.5 683,320.5 685,320.5 687,320.5 689,320.5 691,320.5 693,320.5 695,320.5 697,320.5 699,320.5 701,320.5 703,320.5 705,320.5 707,320.5 709,320.5 711,320.5 713,320.5 715,320.5 717,320.5 719,320.5 721,320.5 723,320.5 725,320.5 727,320.5 729,320.5 731,320.5 733,320.5 735,320.5 737,320.5 739,320.5 741,320.5 743,320.5 745,320.5 747,320.5 749,320.5 751,320.5 753,320.5 755,320.5 757,320.5 759,320.5 761,320.5 763,320.5 765,320.5 767,320.5 769,320.5 771,320.5 773,320.5 775,320.5 777,320.5 779,320.5 781,320.5 783,320.5 785,320.5 787,320.5 789,320.5 791,320.5 793,320.5 795,320.5 797,320.5 799,320.5 801,320.5 803,320.5 805,320.5 807,320.5 809,320.5 811,320.5 813,320.5 815,320.5 817,320.5 819,320.5 821,320.5 823,320.5 825,320.5 827,320.5 829,320.5 831,320.5 833,320.5 835,320.5 837,320.5 839,320.5 841,320.5 843,320.5 845,320.5 847,320.5 849,320.5 851,320.5 853,320.5 855,320.5 857,320.5 859,320.5 861,320.5" stroke="#ffffff"/>
<polyline points="3.0,399.8 10.4,401.0 23.2,397.5 46.4,391.2 69.6,387.0 92.8,383.6 116.0,381.9 129.9,380.8 150.8,380.1 183.3,378.9 190.3,380.1 208.8,378.9 237.8,378.9 249.4,379.6 279.6,379.6 281.9,378.9 298.2,379.4 312.1,379.6 317.9,385.4 326.0,389.4 337.6,394.0 342.3,395.6 356.2,389.4 372.4,386.6 395.6,383.1 407.2,381.7 420.0,381.7 445.5,378.9 468.7,378.5 476.8,376.6 481.5,377.8 488.4,384.0 493.1,386.6 503.5,387.7 517.4,392.4 529.0,395.2 549.9,398.2 582.4,401.0 610.3,403.3 620.0,404.0 641.1,404.8 680.7,407.4 728.2,409.5 783.6,411.4 844.3,413.5 862.0,414.0" stroke="#ffff00"/>
<polyline points="3.0,466.0 304.3,466.0 306.4,468.9 307.8,480.0 308.8,496.7 309.4,517.5 310.6,535.6 311.9,543.2 316.8,545.5 322.4,543.9 324.2,535.6 324.7,524.4 325.8,503.6 326.5,482.8 327.9,470.3 329.3,466.0 467.1,466.0 469.9,468.9 473.3,477.2 475.4,489.7 476.8,503.6 478.2,517.5 479.6,531.4 481.4,541.8 484.4,544.6 493.5,545.8 862.0,546.0" stroke="#ff00ff"/>
<polyline points="3.0,640.0 316.4,640.0 317.8,632.9 319.1,625.7 320.1,619.1 321.1,617.8 322.4,619.7 324.0,626.3 325.7,632.9 328.3,637.5 332.2,640.0 485.4,640.0 487.5,629.2 489.7,618.8 491.9,622.6 493.6,632.5 497.4,638.0 500.7,640.0 510.6,640.0 512.2,624.8 514.4,602.9 517.1,591.9 520.4,588.1 525.9,581.0 528.1,584.3 529.8,597.4 532.0,619.3 534.7,632.5 538.0,638.0 541.3,640.0 862.0,640.0" stroke="#00ffff"/>

 </g>
</svg>
<div class="lab" style="top:55px;color:#00ff00">21.00
AFR</div>
<div class="lab" style="top:149px;color:#0000ff">4315
RPM</div>
<div class="lab" style="top:228px;color:#fff">0.00
Boost
PSI/inHg</div>
<div class="lab" style="top:337px;color:#ffff00">524
EGT</div>
<div class="lab" style="top:352px;left:920px;color:#ffff00">C</div>
<div class="lab" style="top:431px;color:#ff00ff">0
TPS</div>
<div class="lab" style="top:525px;color:#00ffff">0.00
User 1</div>
</div>
<div class="a" style="left:1px;top:77px;width:2px;height:1px;background:#000"></div>
<div id="cursor" class="a"></div>

<div id="sb" class="a"></div>
<div class="btn3d" style="left:0;top:648px;width:16px;height:16px"></div><svg class="a" style="left:0;top:648px" width="16" height="16" shape-rendering="crispEdges" fill="#000"><rect x="5" y="7" width="1" height="2"/><rect x="6" y="6" width="1" height="4"/><rect x="7" y="5" width="1" height="6"/><rect x="8" y="4" width="1" height="8"/></svg>
<div class="btn3d" style="left:427px;top:648px;width:17px;height:16px"></div>
<div class="btn3d" style="left:932px;top:648px;width:16px;height:16px"></div><svg class="a" style="left:932px;top:648px" width="16" height="16" shape-rendering="crispEdges" fill="#000"><rect x="5" y="4" width="1" height="8"/><rect x="6" y="5" width="1" height="6"/><rect x="7" y="6" width="1" height="4"/><rect x="8" y="7" width="1" height="2"/></svg>

<div id="status" class="a">
 <div class="a" style="left:-1px;top:5px;line-height:13px;white-space:nowrap;letter-spacing:-0.05px">Ready... (Press ENTER to start/stop collecting data)</div>
 <div class="pane" style="left:513px;width:156px">9/8/2006 8:39:40 PM</div>
 <div class="pane" style="left:671px;width:92px">Pos: 9938</div>
 <div class="pane" style="left:765px;width:92px">Total: 21533</div>
 <div class="pane" style="left:859px;width:72px"></div>
 <svg class="a" style="left:930px;top:4px" width="18" height="16" shape-rendering="crispEdges"><rect x="7" y="15" width="1" height="1" fill="#ACA899"/><rect x="8" y="14" width="1" height="1" fill="#ACA899"/><rect x="9" y="13" width="1" height="1" fill="#ACA899"/><rect x="10" y="12" width="1" height="1" fill="#ACA899"/><rect x="11" y="11" width="1" height="1" fill="#ACA899"/><rect x="12" y="10" width="1" height="1" fill="#ACA899"/><rect x="13" y="9" width="1" height="1" fill="#ACA899"/><rect x="14" y="8" width="1" height="1" fill="#ACA899"/><rect x="15" y="7" width="1" height="1" fill="#ACA899"/><rect x="16" y="6" width="1" height="1" fill="#ACA899"/><rect x="17" y="5" width="1" height="1" fill="#ACA899"/><rect x="8" y="15" width="1" height="1" fill="#ACA899"/><rect x="9" y="14" width="1" height="1" fill="#ACA899"/><rect x="10" y="13" width="1" height="1" fill="#ACA899"/><rect x="11" y="12" width="1" height="1" fill="#ACA899"/><rect x="12" y="11" width="1" height="1" fill="#ACA899"/><rect x="13" y="10" width="1" height="1" fill="#ACA899"/><rect x="14" y="9" width="1" height="1" fill="#ACA899"/><rect x="15" y="8" width="1" height="1" fill="#ACA899"/><rect x="16" y="7" width="1" height="1" fill="#ACA899"/><rect x="17" y="6" width="1" height="1" fill="#ACA899"/><rect x="9" y="15" width="1" height="1" fill="#fff"/><rect x="10" y="14" width="1" height="1" fill="#fff"/><rect x="11" y="13" width="1" height="1" fill="#fff"/><rect x="12" y="12" width="1" height="1" fill="#fff"/><rect x="13" y="11" width="1" height="1" fill="#fff"/><rect x="14" y="10" width="1" height="1" fill="#fff"/><rect x="15" y="9" width="1" height="1" fill="#fff"/><rect x="16" y="8" width="1" height="1" fill="#fff"/><rect x="17" y="7" width="1" height="1" fill="#fff"/><rect x="11" y="15" width="1" height="1" fill="#ACA899"/><rect x="12" y="14" width="1" height="1" fill="#ACA899"/><rect x="13" y="13" width="1" height="1" fill="#ACA899"/><rect x="14" y="12" width="1" height="1" fill="#ACA899"/><rect x="15" y="11" width="1" height="1" fill="#ACA899"/><rect x="16" y="10" width="1" height="1" fill="#ACA899"/><rect x="17" y="9" width="1" height="1" fill="#ACA899"/><rect x="12" y="15" width="1" height="1" fill="#ACA899"/><rect x="13" y="14" width="1" height="1" fill="#ACA899"/><rect x="14" y="13" width="1" height="1" fill="#ACA899"/><rect x="15" y="12" width="1" height="1" fill="#ACA899"/><rect x="16" y="11" width="1" height="1" fill="#ACA899"/><rect x="17" y="10" width="1" height="1" fill="#ACA899"/><rect x="13" y="15" width="1" height="1" fill="#fff"/><rect x="14" y="14" width="1" height="1" fill="#fff"/><rect x="15" y="13" width="1" height="1" fill="#fff"/><rect x="16" y="12" width="1" height="1" fill="#fff"/><rect x="17" y="11" width="1" height="1" fill="#fff"/><rect x="15" y="15" width="1" height="1" fill="#ACA899"/><rect x="16" y="14" width="1" height="1" fill="#ACA899"/><rect x="17" y="13" width="1" height="1" fill="#ACA899"/><rect x="16" y="15" width="1" height="1" fill="#ACA899"/><rect x="17" y="14" width="1" height="1" fill="#ACA899"/><rect x="17" y="15" width="1" height="1" fill="#fff"/></svg>
</div>
</body></html>
